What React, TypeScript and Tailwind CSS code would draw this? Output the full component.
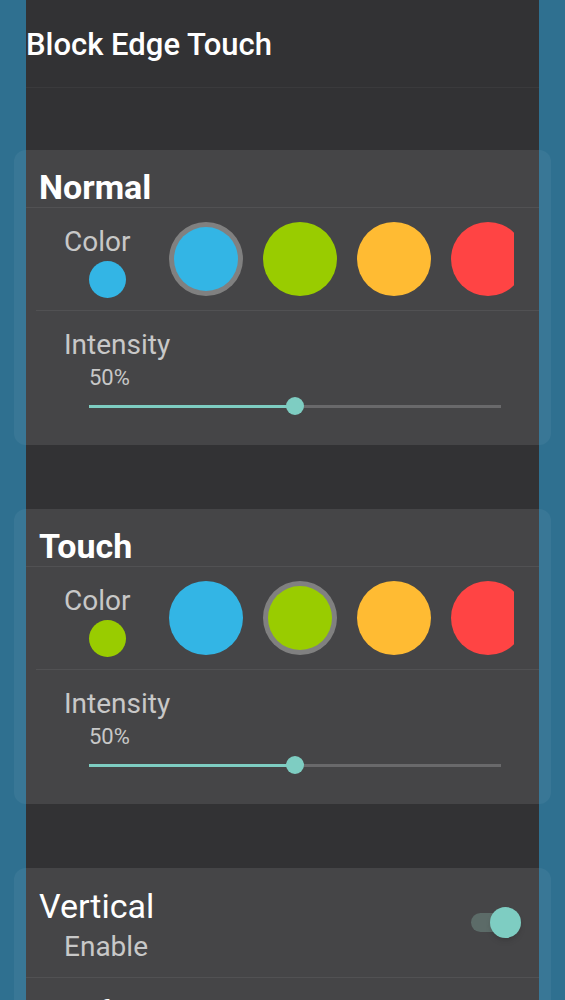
import React from "react";

const SWATCHES = ["#33b5e5", "#99cc00", "#ffbb33", "#ff4444"];

const Gap: React.FC<{ h: string }> = ({ h }) => (
  <div className={`mx-[12px] bg-[#323234] ${h}`} />
);

const Swatch: React.FC<{ color: string; selected: boolean }> = ({ color, selected }) =>
  selected ? (
    <div className="w-[74px] h-[74px] shrink-0 rounded-full bg-[#808080] flex items-center justify-center">
      <div className="w-[64px] h-[64px] rounded-full" style={{ backgroundColor: color }} />
    </div>
  ) : (
    <div className="w-[74px] h-[74px] shrink-0 rounded-full" style={{ backgroundColor: color }} />
  );

const ColorCard: React.FC<{ title: string; selected: number }> = ({ title, selected }) => (
  <div className="rounded-xl bg-white/5 px-[12px]">
    <div className="bg-[#454547]">
      <div className="h-[58px] pt-[18px] pl-[13px] text-[34px] leading-[38px] font-bold text-white border-b border-[#515153]">
        {title}
      </div>

      {/* color row */}
      <div className="h-[102px] flex">
        <div className="w-[143px] shrink-0 pl-[38px] pt-[18px] flex flex-col">
          <span className="text-[28px] leading-[32px] text-[#c8c8c8]">Color</span>
          <div
            className="ml-[25px] mt-[3px] w-[37px] h-[37px] rounded-full"
            style={{ backgroundColor: SWATCHES[selected] }}
          />
        </div>
        <div className="flex-1 mr-[25px] overflow-hidden flex items-center gap-[20px]">
          {SWATCHES.map((c, i) => (
            <Swatch key={c} color={c} selected={i === selected} />
          ))}
        </div>
      </div>

      <div className="ml-[10px] border-t border-[#515153]" />

      {/* intensity row */}
      <div className="h-[134px] pl-[38px] pt-[18px] flex flex-col">
        <span className="text-[28px] leading-[32px] text-[#c8c8c8]">Intensity</span>
        <span className="ml-[25px] mt-[4px] text-[22px] leading-[26px] text-[#c8c8c8]">50%</span>
        <div className="ml-[25px] mt-[6px] w-[412px] h-[18px] relative flex items-center">
          <div className="w-1/2 h-[3px] bg-[#7ecdc2]" />
          <div className="w-1/2 h-[3px] bg-[#69696b]" />
          <div className="absolute left-[197px] top-0 w-[18px] h-[18px] rounded-full bg-[#7ecdc2]" />
        </div>
      </div>
    </div>
  </div>
);

export default function App() {
  return (
    <div
      className="h-[1000px] overflow-hidden bg-[#2f7090] px-[14px]"
      style={{ fontFamily: "Roboto, 'Noto Sans', sans-serif" }}
    >
      <div className="mx-[12px] bg-[#323234]">
        <div className="h-[88px] flex items-center border-b border-[#3a3a3c]">
          <span className="text-[31px] leading-[36px] font-medium text-white mt-[2px]">
            Block Edge Touch
          </span>
        </div>
        <div className="h-[62px]" />
      </div>

      <ColorCard title="Normal" selected={0} />
      <Gap h="h-[64px]" />
      <ColorCard title="Touch" selected={1} />
      <Gap h="h-[64px]" />

      <div className="rounded-xl bg-white/5 px-[12px]">
        <div className="bg-[#454547]">
          <div className="h-[110px] flex items-center justify-between border-b border-[#515153]">
            <div className="flex flex-col self-start pt-[18px]">
              <span className="pl-[13px] text-[34px] leading-[40px] text-white">Vertical</span>
              <span className="pl-[38px] mt-[5px] text-[28px] leading-[32px] text-[#c8c8c8]">Enable</span>
            </div>
            <div className="mr-[18px] relative w-[50px] h-[31px] flex items-center">
              <div className="w-[48px] h-[19px] rounded-full bg-[#5c6b68]" />
              <div className="absolute right-0 top-0 w-[31px] h-[31px] rounded-full bg-[#7ecdc2] shadow-md" />
            </div>
          </div>
          <div className="h-[80px] pl-[38px] pt-[15px]">
            <span className="text-[32px] leading-[38px] text-white">Left Side</span>
          </div>
        </div>
      </div>
    </div>
  );
}
